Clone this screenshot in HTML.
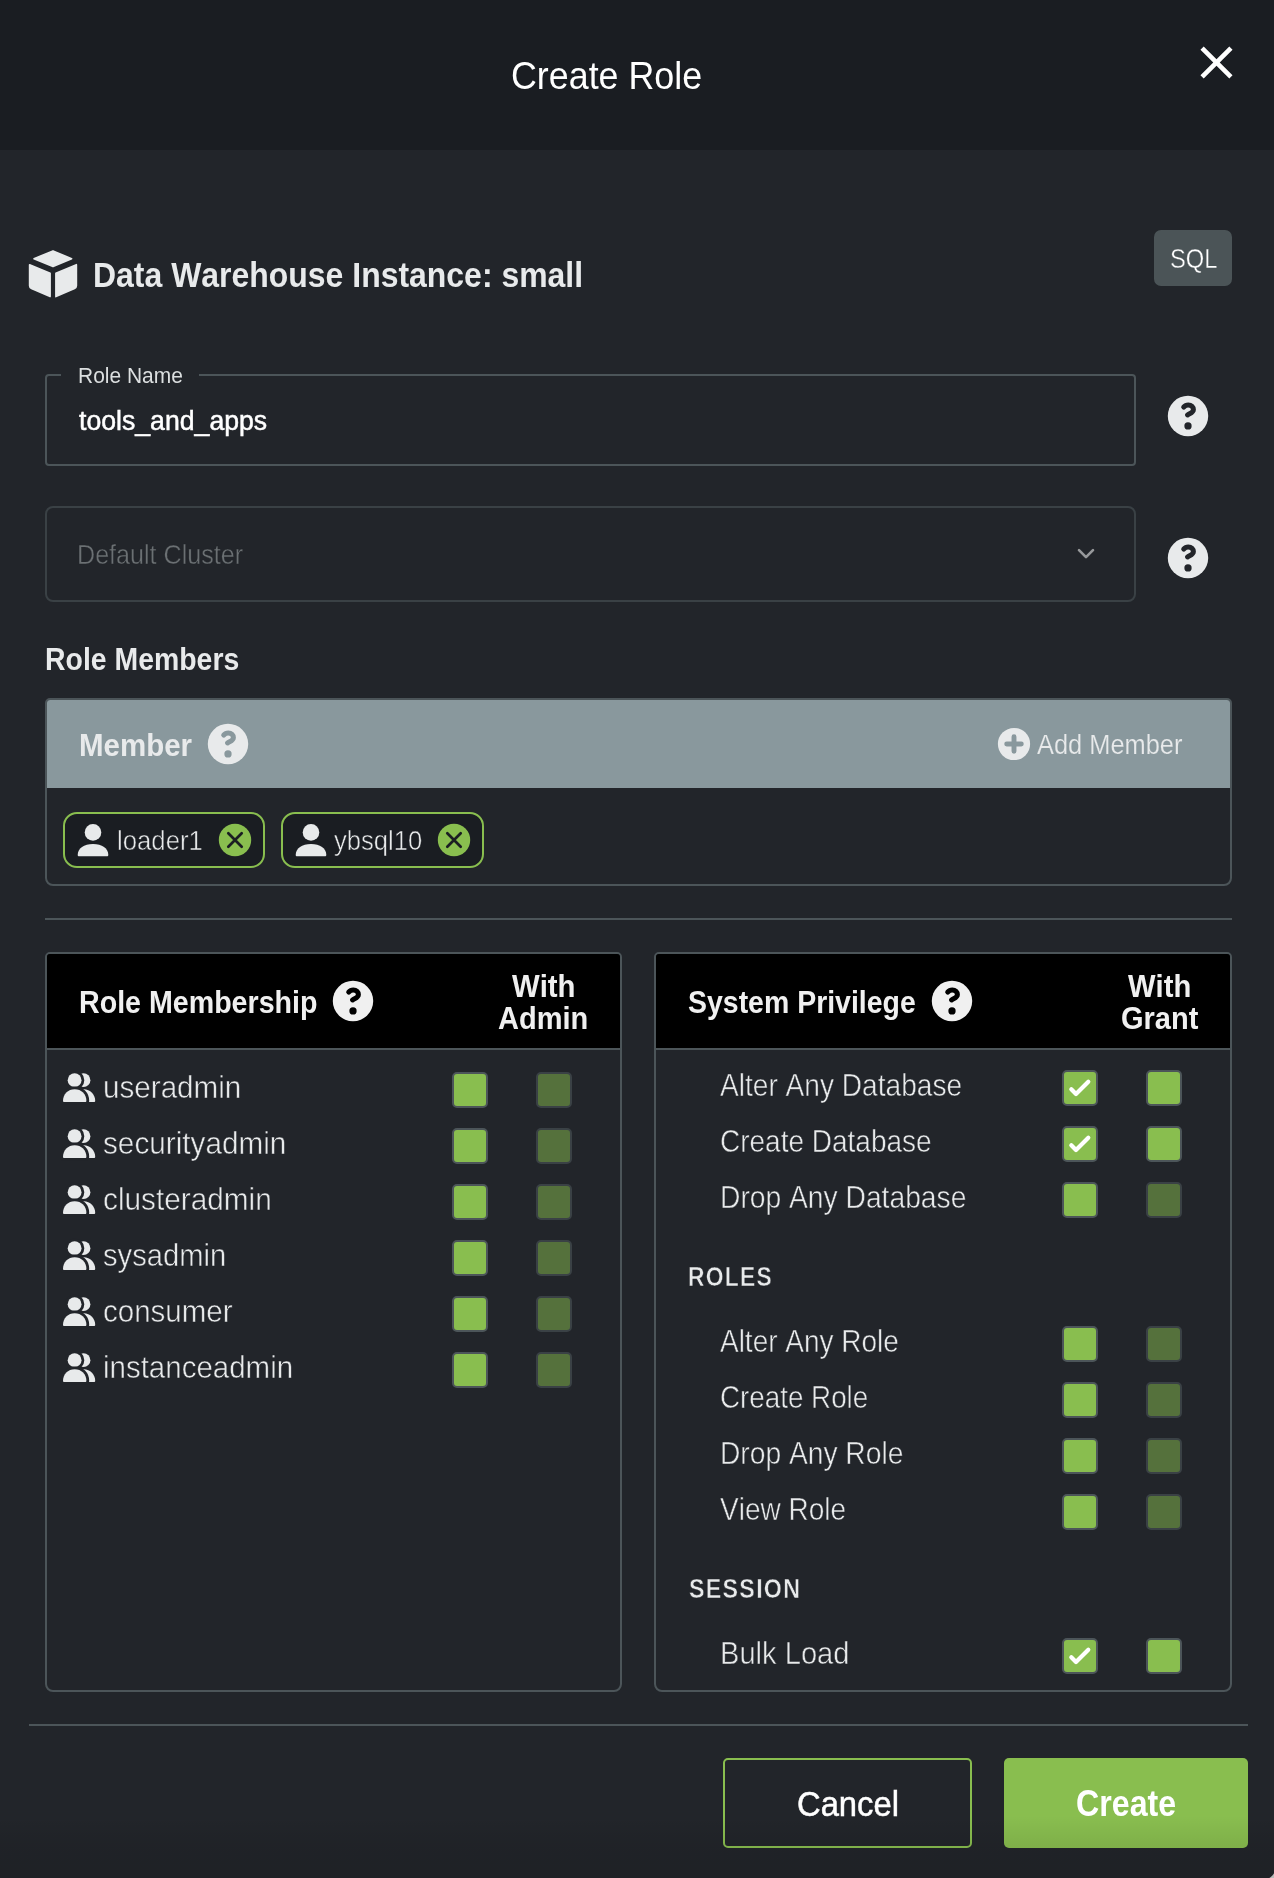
<!DOCTYPE html>
<html lang="en"><head><meta charset="utf-8"><meta name="viewport" content="width=1274"><title>Create Role</title>
<style>
html,body{margin:0;padding:0}
body{width:1274px;height:1878px;overflow:hidden;position:relative;background:#b9b9b9;font-family:"Liberation Sans",sans-serif;color:#e8eaeb}
#dialog{position:absolute;left:0;top:0;width:1275.5px;height:1879.5px;background:#22252a;overflow:hidden;border-bottom-right-radius:14px;will-change:transform}
#dialog *{box-sizing:border-box}
header{position:absolute;left:0;top:0;width:1274px;height:150px;background:#1a1d22}
.t{position:absolute;white-space:nowrap;line-height:1;transform-origin:0 0;font-kerning:none;margin:0;font-weight:400}
.ico{position:absolute;display:block;overflow:visible}
.box{position:absolute;border:2px solid #4c5559;border-radius:4px}
.hr{position:absolute;height:2px;background:#4c5559}
.cb{position:absolute;width:36px;height:36px;border:2px solid #4c5559;border-radius:5px;background:#89be4f;display:block}
.cb.dim{background:#55713c;border-color:#3a4145}
.cb svg{display:block}
.panel{position:absolute;border:2px solid #4c5559;border-radius:5px 5px 8px 8px;overflow:hidden}
.panel .hd{position:absolute;left:0;top:0;right:0}
.btn{position:absolute;border-radius:5px}
.shade{position:absolute;left:0;top:1816px;width:1274px;height:62px;background:linear-gradient(to bottom,rgba(0,0,0,0),rgba(0,0,0,.07) 45%,rgba(0,0,0,.1));pointer-events:none}
</style></head><body>
<div id="dialog">

<header>
<h1 class="t" style="left:510.88px;top:56px;font-size:39px;transform:scaleX(0.9184);color:#ffffff;">Create Role</h1>
<svg class="ico" style="left:1188.5px;top:34.5px" width="55" height="55" viewBox="0 0 24 24"><path fill="#fff" d="M19 6.41L17.59 5 12 10.59 6.41 5 5 6.41 10.59 12 5 17.59 6.410 19 12 13.41 17.59 19 19 17.59 13.41 12z"/></svg>
</header>

<section id="form">
<svg class="ico" style="left:28px;top:249px" width="50" height="50" viewBox="28 249 50 50"><g fill="#e8eaeb" stroke="#e8eaeb" stroke-width="1.6" stroke-linejoin="round"><path d="M53 250.9L71.6 258.7L53 266.6L34 258.7Z"/><path d="M29.6 264.7L50.1 273.2L50.1 296.6L31.5 288.6Q29.6 287.7 29.6 285.8Z"/><path d="M55.9 273.2L76.4 264.7L76.4 285.8Q76.4 287.7 74.5 288.6L55.9 296.6Z"/></g></svg>
<h2 class="t" style="left:92.86px;top:258px;font-size:34.5px;transform:scaleX(0.9262);font-weight:700;">Data Warehouse Instance: small</h2>
<div class="btn" style="left:1154px;top:230px;width:78px;height:56px;background:#4b5457;border-radius:7px"></div>
<span class="t" style="left:1169.56px;top:245px;font-size:28px;transform:scaleX(0.8475);color:#ffffff;-webkit-text-stroke:0.4px #4b5457;">SQL</span>
<div class="box" style="left:45px;top:374px;width:1091px;height:92px"></div>
<div class="mask" style="position:absolute;left:60.6px;top:372px;width:138.4px;height:6px;background:#22252a"></div>
<label class="t" style="left:77.98px;top:365px;font-size:22.5px;transform:scaleX(0.9316);color:#dcdfe0;">Role Name</label>
<span class="t" style="left:79.00px;top:407px;font-size:27.5px;transform:scaleX(0.9690);color:#ffffff;-webkit-text-stroke:0.5px #fff;">tools_and_apps</span>
<svg class="ico" style="left:1167px;top:395px" width="42" height="42" viewBox="-21 -21 42 42"><circle r="20.2" fill="#e8eaeb"/><path d="M-4.3 -8.9C-3 -10.5 -1.3 -11.1 0.3 -11.1C3.4 -11.1 5.4 -9.1 5.4 -6.5C5.4 -3.2 1.6 -2.6 -0.4 -1.1" fill="none" stroke="#22252a" stroke-width="5" stroke-linecap="round" stroke-linejoin="round"/><circle cy="9.9" r="3.65" fill="#22252a"/></svg>
<div class="box" style="left:45px;top:506px;width:1091px;height:96px;border-color:#3a4145;border-radius:8px"></div>
<span class="t" style="left:77.08px;top:541px;font-size:27.5px;transform:scaleX(0.9132);color:#6b7073;-webkit-text-stroke:0.4px #22252a;">Default Cluster</span>
<svg class="ico" style="left:1074px;top:542px" width="24" height="24" viewBox="1074 542 24 24"><path d="M1079 550.2L1086 557.2L1093 550.2" fill="none" stroke="#97999b" stroke-width="2.6" stroke-linecap="round" stroke-linejoin="round"/></svg>
<svg class="ico" style="left:1167px;top:537px" width="42" height="42" viewBox="-21 -21 42 42"><circle r="20.2" fill="#e8eaeb"/><path d="M-4.3 -8.9C-3 -10.5 -1.3 -11.1 0.3 -11.1C3.4 -11.1 5.4 -9.1 5.4 -6.5C5.4 -3.2 1.6 -2.6 -0.4 -1.1" fill="none" stroke="#22252a" stroke-width="5" stroke-linecap="round" stroke-linejoin="round"/><circle cy="9.9" r="3.65" fill="#22252a"/></svg>
</section>

<section id="members">
<h3 class="t" style="left:45.30px;top:644px;font-size:30.5px;transform:scaleX(0.9318);font-weight:700;">Role Members</h3>
<div class="panel" style="left:45px;top:698px;width:1187px;height:188px">
<div class="hd" style="height:88px;background:#89989d"></div></div>
<span class="t" style="left:79.43px;top:730px;font-size:30.5px;transform:scaleX(0.9664);font-weight:700;">Member</span>
<svg class="ico" style="left:207px;top:723px" width="42" height="42" viewBox="-21 -21 42 42"><circle r="20.2" fill="#e8eaeb"/><path d="M-4.3 -8.9C-3 -10.5 -1.3 -11.1 0.3 -11.1C3.4 -11.1 5.4 -9.1 5.4 -6.5C5.4 -3.2 1.6 -2.6 -0.4 -1.1" fill="none" stroke="#89989d" stroke-width="5" stroke-linecap="round" stroke-linejoin="round"/><circle cy="9.9" r="3.65" fill="#89989d"/></svg>
<svg class="ico" style="left:997px;top:726.9px" width="34" height="34" viewBox="-17 -17 34 34"><circle r="16.1" fill="#e8eaeb"/><path d="M-7.3 0L7.3 0M0 -7.3L0 7.3" stroke="#89989d" stroke-width="4.9" stroke-linecap="round"/></svg>
<span class="t" style="left:1037.47px;top:731px;font-size:27.5px;transform:scaleX(0.9238);-webkit-text-stroke:0.2px #89989d;">Add Member</span>
<div class="box" style="left:63px;top:812px;width:202px;height:56px;border-color:#89be4f;border-radius:14px;background:#1a1d22"></div>
<svg class="ico" style="left:77px;top:823.8px" width="32" height="33" viewBox="-16 0 32 33"><circle cy="8.4" r="8.3" fill="#e8eaeb"/><path d="M-15.3 31C-15.3 24.5 -9 20.1 0 20.1C9 20.1 15.3 24.5 15.3 31C15.3 31.9 14.8 32.3 14 32.3L-14 32.3C-14.8 32.3 -15.3 31.9 -15.3 31Z" fill="#e8eaeb"/></svg>
<span class="t" style="left:116.55px;top:827px;font-size:27.5px;transform:scaleX(0.9356);-webkit-text-stroke:0.55px #1a1d22;">loader1</span>
<svg class="ico" style="left:218px;top:823px" width="34" height="34" viewBox="-17 -17 34 34"><circle r="16.2" fill="#89be4f"/><path d="M-6.7 -6.7L6.7 6.7M6.7 -6.7L-6.7 6.7" stroke="#1a1d22" stroke-width="2.7" stroke-linecap="round" fill="none"/></svg>
<div class="box" style="left:281px;top:812px;width:203px;height:56px;border-color:#89be4f;border-radius:14px;background:#1a1d22"></div>
<svg class="ico" style="left:295px;top:823.8px" width="32" height="33" viewBox="-16 0 32 33"><circle cy="8.4" r="8.3" fill="#e8eaeb"/><path d="M-15.3 31C-15.3 24.5 -9 20.1 0 20.1C9 20.1 15.3 24.5 15.3 31C15.3 31.9 14.8 32.3 14 32.3L-14 32.3C-14.8 32.3 -15.3 31.9 -15.3 31Z" fill="#e8eaeb"/></svg>
<span class="t" style="left:334.32px;top:827px;font-size:27.5px;transform:scaleX(0.9305);-webkit-text-stroke:0.55px #1a1d22;">ybsql10</span>
<svg class="ico" style="left:437px;top:823px" width="34" height="34" viewBox="-17 -17 34 34"><circle r="16.2" fill="#89be4f"/><path d="M-6.7 -6.7L6.7 6.7M6.7 -6.7L-6.7 6.7" stroke="#1a1d22" stroke-width="2.7" stroke-linecap="round" fill="none"/></svg>
<div class="hr" style="left:45px;top:918px;width:1187px"></div>
</section>

<section id="role-membership">
<div class="panel" style="left:45px;top:952px;width:577px;height:740px"><div class="hd" style="height:96px;background:#000;border-bottom:2px solid #4c5559"></div></div>
<span class="t" style="left:79.49px;top:987px;font-size:30.5px;transform:scaleX(0.9381);font-weight:700;color:#f0f0f0;">Role Membership</span>
<svg class="ico" style="left:332px;top:979.8px" width="42" height="42" viewBox="-21 -21 42 42"><circle r="20.2" fill="#f0f0f0"/><path d="M-4.3 -8.9C-3 -10.5 -1.3 -11.1 0.3 -11.1C3.4 -11.1 5.4 -9.1 5.4 -6.5C5.4 -3.2 1.6 -2.6 -0.4 -1.1" fill="none" stroke="#000" stroke-width="5" stroke-linecap="round" stroke-linejoin="round"/><circle cy="9.9" r="3.65" fill="#000"/></svg>
<span class="t" style="left:512.37px;top:971px;font-size:30.5px;transform:scaleX(0.9621);font-weight:700;color:#f0f0f0;">With</span>
<span class="t" style="left:498.48px;top:1003px;font-size:30.5px;transform:scaleX(0.9509);font-weight:700;color:#f0f0f0;">Admin</span>
<svg class="ico" style="left:62.8px;top:1073px" width="34" height="30" viewBox="0 0 34 30"><circle cx="20.5" cy="7.2" r="6.9" fill="#e8eaeb"/><path d="M9 29C9 21 14 16.2 20.5 16.2C27.5 16.2 32.2 21.5 32.2 27.8C32.2 28.6 31.8 29 31 29Z" fill="#e8eaeb"/><circle cx="11.6" cy="7.2" r="6.9" fill="#e8eaeb" stroke="#22252a" stroke-width="5.6" paint-order="stroke"/><path d="M0 27.8C0 21 5 16.2 11.7 16.2C18.4 16.2 23.4 21 23.4 27.8C23.4 28.6 23 29 22.2 29L1.2 29C0.4 29 0 28.6 0 27.8Z" fill="#e8eaeb" stroke="#22252a" stroke-width="5.6" paint-order="stroke"/></svg>
<span class="t" style="left:102.88px;top:1072px;font-size:30.5px;transform:scaleX(0.9715);-webkit-text-stroke:0.5px #22252a;">useradmin</span>
<span class="cb" style="left:452px;top:1072px"></span>
<span class="cb dim" style="left:536px;top:1072px"></span>
<svg class="ico" style="left:62.8px;top:1129px" width="34" height="30" viewBox="0 0 34 30"><circle cx="20.5" cy="7.2" r="6.9" fill="#e8eaeb"/><path d="M9 29C9 21 14 16.2 20.5 16.2C27.5 16.2 32.2 21.5 32.2 27.8C32.2 28.6 31.8 29 31 29Z" fill="#e8eaeb"/><circle cx="11.6" cy="7.2" r="6.9" fill="#e8eaeb" stroke="#22252a" stroke-width="5.6" paint-order="stroke"/><path d="M0 27.8C0 21 5 16.2 11.7 16.2C18.4 16.2 23.4 21 23.4 27.8C23.4 28.6 23 29 22.2 29L1.2 29C0.4 29 0 28.6 0 27.8Z" fill="#e8eaeb" stroke="#22252a" stroke-width="5.6" paint-order="stroke"/></svg>
<span class="t" style="left:103.07px;top:1128px;font-size:30.5px;transform:scaleX(0.9745);-webkit-text-stroke:0.5px #22252a;">securityadmin</span>
<span class="cb" style="left:452px;top:1128px"></span>
<span class="cb dim" style="left:536px;top:1128px"></span>
<svg class="ico" style="left:62.8px;top:1185px" width="34" height="30" viewBox="0 0 34 30"><circle cx="20.5" cy="7.2" r="6.9" fill="#e8eaeb"/><path d="M9 29C9 21 14 16.2 20.5 16.2C27.5 16.2 32.2 21.5 32.2 27.8C32.2 28.6 31.8 29 31 29Z" fill="#e8eaeb"/><circle cx="11.6" cy="7.2" r="6.9" fill="#e8eaeb" stroke="#22252a" stroke-width="5.6" paint-order="stroke"/><path d="M0 27.8C0 21 5 16.2 11.7 16.2C18.4 16.2 23.4 21 23.4 27.8C23.4 28.6 23 29 22.2 29L1.2 29C0.4 29 0 28.6 0 27.8Z" fill="#e8eaeb" stroke="#22252a" stroke-width="5.6" paint-order="stroke"/></svg>
<span class="t" style="left:103.14px;top:1184px;font-size:30.5px;transform:scaleX(0.9757);-webkit-text-stroke:0.5px #22252a;">clusteradmin</span>
<span class="cb" style="left:452px;top:1184px"></span>
<span class="cb dim" style="left:536px;top:1184px"></span>
<svg class="ico" style="left:62.8px;top:1241px" width="34" height="30" viewBox="0 0 34 30"><circle cx="20.5" cy="7.2" r="6.9" fill="#e8eaeb"/><path d="M9 29C9 21 14 16.2 20.5 16.2C27.5 16.2 32.2 21.5 32.2 27.8C32.2 28.6 31.8 29 31 29Z" fill="#e8eaeb"/><circle cx="11.6" cy="7.2" r="6.9" fill="#e8eaeb" stroke="#22252a" stroke-width="5.6" paint-order="stroke"/><path d="M0 27.8C0 21 5 16.2 11.7 16.2C18.4 16.2 23.4 21 23.4 27.8C23.4 28.6 23 29 22.2 29L1.2 29C0.4 29 0 28.6 0 27.8Z" fill="#e8eaeb" stroke="#22252a" stroke-width="5.6" paint-order="stroke"/></svg>
<span class="t" style="left:103.09px;top:1240px;font-size:30.5px;transform:scaleX(0.9564);-webkit-text-stroke:0.5px #22252a;">sysadmin</span>
<span class="cb" style="left:452px;top:1240px"></span>
<span class="cb dim" style="left:536px;top:1240px"></span>
<svg class="ico" style="left:62.8px;top:1297px" width="34" height="30" viewBox="0 0 34 30"><circle cx="20.5" cy="7.2" r="6.9" fill="#e8eaeb"/><path d="M9 29C9 21 14 16.2 20.5 16.2C27.5 16.2 32.2 21.5 32.2 27.8C32.2 28.6 31.8 29 31 29Z" fill="#e8eaeb"/><circle cx="11.6" cy="7.2" r="6.9" fill="#e8eaeb" stroke="#22252a" stroke-width="5.6" paint-order="stroke"/><path d="M0 27.8C0 21 5 16.2 11.7 16.2C18.4 16.2 23.4 21 23.4 27.8C23.4 28.6 23 29 22.2 29L1.2 29C0.4 29 0 28.6 0 27.8Z" fill="#e8eaeb" stroke="#22252a" stroke-width="5.6" paint-order="stroke"/></svg>
<span class="t" style="left:103.15px;top:1296px;font-size:30.5px;transform:scaleX(0.9674);-webkit-text-stroke:0.5px #22252a;">consumer</span>
<span class="cb" style="left:452px;top:1296px"></span>
<span class="cb dim" style="left:536px;top:1296px"></span>
<svg class="ico" style="left:62.8px;top:1353px" width="34" height="30" viewBox="0 0 34 30"><circle cx="20.5" cy="7.2" r="6.9" fill="#e8eaeb"/><path d="M9 29C9 21 14 16.2 20.5 16.2C27.5 16.2 32.2 21.5 32.2 27.8C32.2 28.6 31.8 29 31 29Z" fill="#e8eaeb"/><circle cx="11.6" cy="7.2" r="6.9" fill="#e8eaeb" stroke="#22252a" stroke-width="5.6" paint-order="stroke"/><path d="M0 27.8C0 21 5 16.2 11.7 16.2C18.4 16.2 23.4 21 23.4 27.8C23.4 28.6 23 29 22.2 29L1.2 29C0.4 29 0 28.6 0 27.8Z" fill="#e8eaeb" stroke="#22252a" stroke-width="5.6" paint-order="stroke"/></svg>
<span class="t" style="left:103.33px;top:1352px;font-size:30.5px;transform:scaleX(0.9665);-webkit-text-stroke:0.5px #22252a;">instanceadmin</span>
<span class="cb" style="left:452px;top:1352px"></span>
<span class="cb dim" style="left:536px;top:1352px"></span>
</section>

<section id="system-privilege">
<div class="panel" style="left:654px;top:952px;width:578px;height:740px"><div class="hd" style="height:96px;background:#000;border-bottom:2px solid #4c5559"></div></div>
<span class="t" style="left:688.18px;top:987px;font-size:30.5px;transform:scaleX(0.9331);font-weight:700;color:#f0f0f0;">System Privilege</span>
<svg class="ico" style="left:931px;top:979.8px" width="42" height="42" viewBox="-21 -21 42 42"><circle r="20.2" fill="#f0f0f0"/><path d="M-4.3 -8.9C-3 -10.5 -1.3 -11.1 0.3 -11.1C3.4 -11.1 5.4 -9.1 5.4 -6.5C5.4 -3.2 1.6 -2.6 -0.4 -1.1" fill="none" stroke="#000" stroke-width="5" stroke-linecap="round" stroke-linejoin="round"/><circle cy="9.9" r="3.65" fill="#000"/></svg>
<span class="t" style="left:1128.07px;top:971px;font-size:30.5px;transform:scaleX(0.9575);font-weight:700;color:#f0f0f0;">With</span>
<span class="t" style="left:1120.71px;top:1003px;font-size:30.5px;transform:scaleX(0.9508);font-weight:700;color:#f0f0f0;">Grant</span>
<span class="t" style="left:719.95px;top:1070px;font-size:30.5px;transform:scaleX(0.9213);-webkit-text-stroke:0.5px #22252a;">Alter Any Database</span>
<span class="cb" style="left:1062px;top:1070px"><svg width="32" height="32" viewBox="0 0 32 32"><path d="M7.3 17.2L12 22L24.3 9.8" fill="none" stroke="#fff" stroke-width="4.2" stroke-linecap="round" stroke-linejoin="round"/></svg></span>
<span class="cb" style="left:1146px;top:1070px"></span>
<span class="t" style="left:719.78px;top:1126px;font-size:30.5px;transform:scaleX(0.9175);-webkit-text-stroke:0.5px #22252a;">Create Database</span>
<span class="cb" style="left:1062px;top:1126px"><svg width="32" height="32" viewBox="0 0 32 32"><path d="M7.3 17.2L12 22L24.3 9.8" fill="none" stroke="#fff" stroke-width="4.2" stroke-linecap="round" stroke-linejoin="round"/></svg></span>
<span class="cb" style="left:1146px;top:1126px"></span>
<span class="t" style="left:719.68px;top:1182px;font-size:30.5px;transform:scaleX(0.9256);-webkit-text-stroke:0.5px #22252a;">Drop Any Database</span>
<span class="cb" style="left:1062px;top:1182px"></span>
<span class="cb dim" style="left:1146px;top:1182px"></span>
<span class="t" style="left:719.95px;top:1326px;font-size:30.5px;transform:scaleX(0.9172);-webkit-text-stroke:0.5px #22252a;">Alter Any Role</span>
<span class="cb" style="left:1062px;top:1326px"></span>
<span class="cb dim" style="left:1146px;top:1326px"></span>
<span class="t" style="left:719.79px;top:1382px;font-size:30.5px;transform:scaleX(0.9109);-webkit-text-stroke:0.5px #22252a;">Create Role</span>
<span class="cb" style="left:1062px;top:1382px"></span>
<span class="cb dim" style="left:1146px;top:1382px"></span>
<span class="t" style="left:719.69px;top:1438px;font-size:30.5px;transform:scaleX(0.9245);-webkit-text-stroke:0.5px #22252a;">Drop Any Role</span>
<span class="cb" style="left:1062px;top:1438px"></span>
<span class="cb dim" style="left:1146px;top:1438px"></span>
<span class="t" style="left:719.88px;top:1494px;font-size:30.5px;transform:scaleX(0.9181);-webkit-text-stroke:0.5px #22252a;">View Role</span>
<span class="cb" style="left:1062px;top:1494px"></span>
<span class="cb dim" style="left:1146px;top:1494px"></span>
<span class="t" style="left:719.61px;top:1638px;font-size:30.5px;transform:scaleX(0.9544);-webkit-text-stroke:0.5px #22252a;">Bulk Load</span>
<span class="cb" style="left:1062px;top:1638px"><svg width="32" height="32" viewBox="0 0 32 32"><path d="M7.3 17.2L12 22L24.3 9.8" fill="none" stroke="#fff" stroke-width="4.2" stroke-linecap="round" stroke-linejoin="round"/></svg></span>
<span class="cb" style="left:1146px;top:1638px"></span>
<span class="t" style="left:688.37px;top:1263px;font-size:27.5px;transform:scaleX(0.8301);font-weight:700;letter-spacing:1.5px;-webkit-text-stroke:0.5px #22252a;">ROLES</span>
<span class="t" style="left:689.23px;top:1575px;font-size:27.5px;transform:scaleX(0.8459);font-weight:700;letter-spacing:1.5px;-webkit-text-stroke:0.5px #22252a;">SESSION</span>
</section>

<footer>
<div class="hr" style="left:29px;top:1724px;width:1219px"></div>
<div class="btn" style="left:723px;top:1758px;width:249px;height:90px;border:2px solid #89be4f"></div>
<span class="t" style="left:796.54px;top:1787px;font-size:34.5px;transform:scaleX(0.9494);color:#ffffff;-webkit-text-stroke:0.5px #fff;">Cancel</span>
<div class="btn" style="left:1004px;top:1758px;width:244px;height:90px;background:#89be4f"></div>
<span class="t" style="left:1076.28px;top:1786px;font-size:36px;transform:scaleX(0.8934);font-weight:700;color:#ffffff;">Create</span>
</footer>

<div class="shade"></div>
</div>
</body></html>
